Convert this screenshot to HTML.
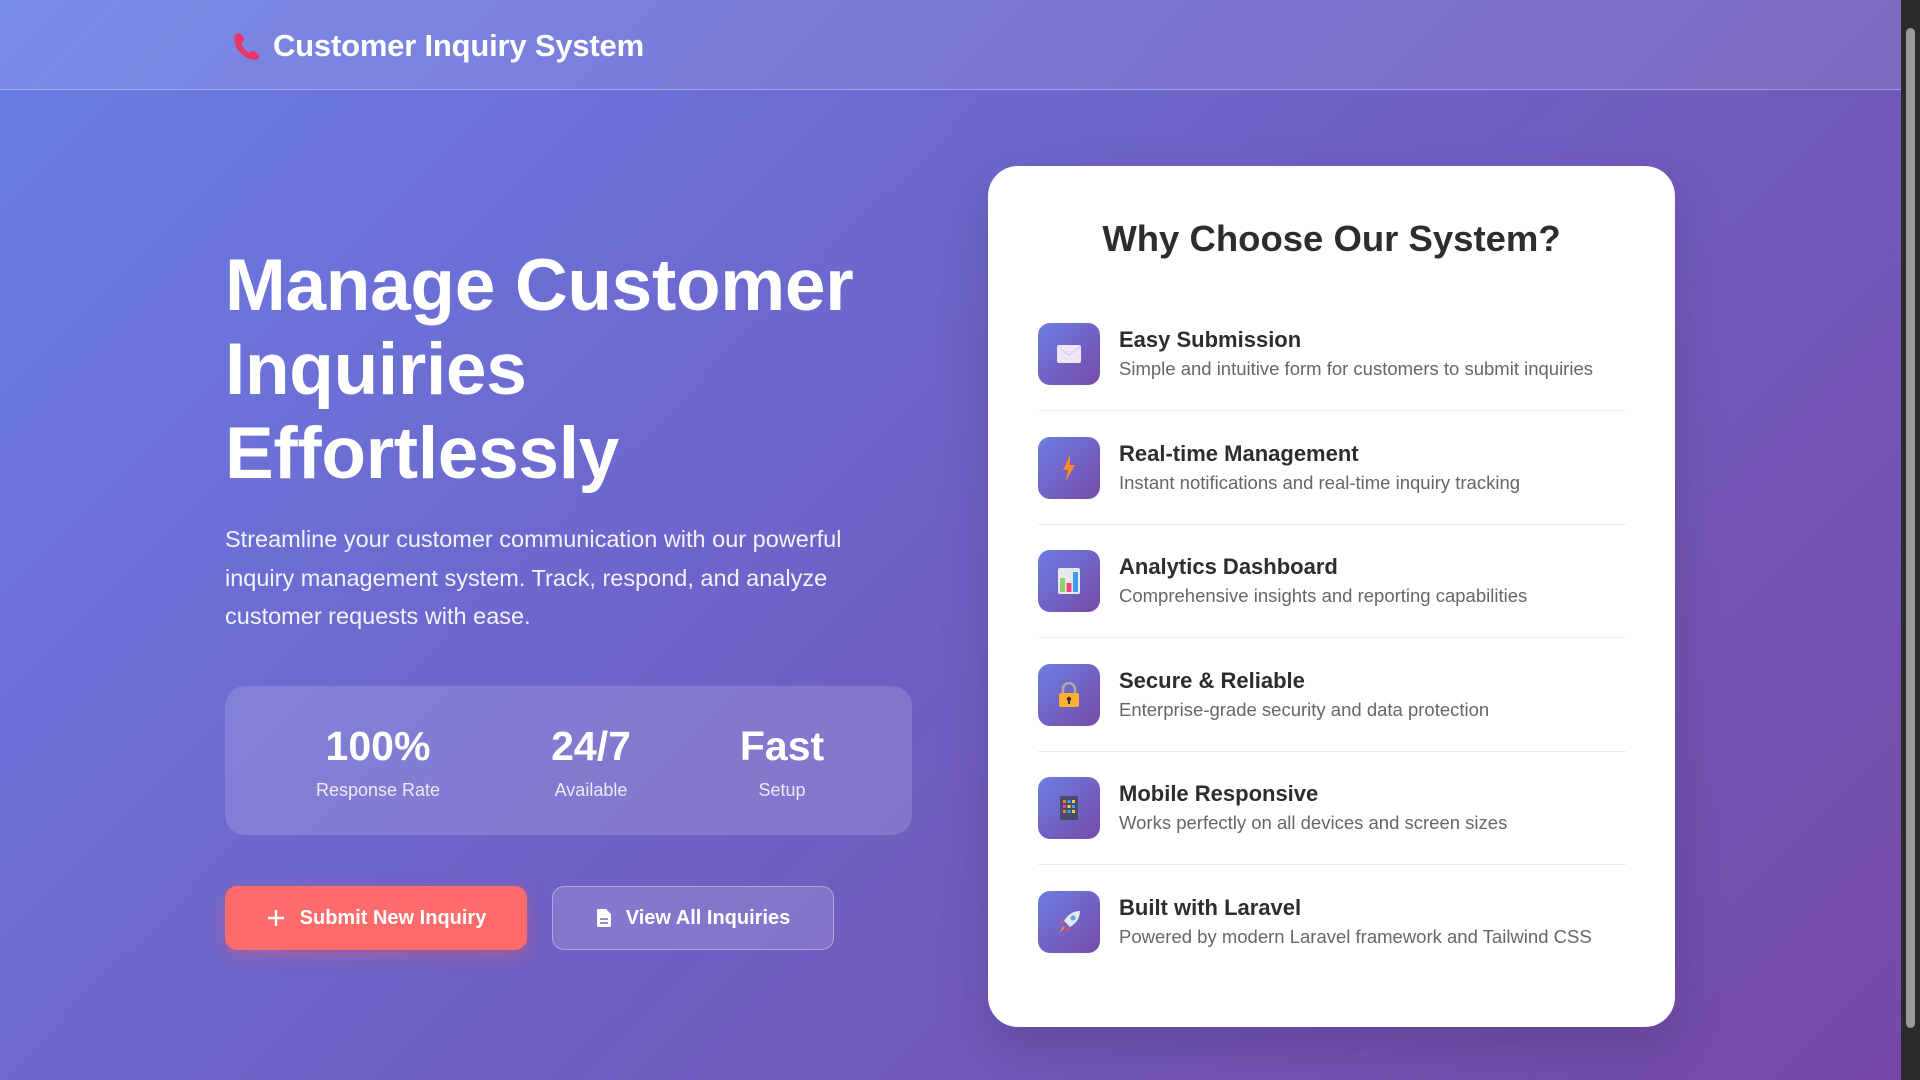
<!DOCTYPE html>
<html><head><meta charset="utf-8"><style>
*{margin:0;padding:0;box-sizing:border-box}
html,body{width:1920px;height:1080px;overflow:hidden}
body{font-family:"Liberation Sans",sans-serif;background:linear-gradient(135deg,#6a7fe6 0%,#6e63c8 45%,#7549a6 100%);position:relative;color:#fff}
.hdr{position:absolute;left:0;top:0;width:1901px;height:90px;background:rgba(255,255,255,0.1);border-bottom:1px solid rgba(255,255,255,0.3)}
.logo{position:absolute;left:231px;top:30px}
.brand{position:absolute;left:273px;top:28px;font-size:31px;font-weight:bold;letter-spacing:-0.2px}
h1{position:absolute;left:225px;top:244px;font-size:73px;line-height:84px;font-weight:bold;letter-spacing:-0.3px}
.lead{position:absolute;left:225px;top:520px;width:690px;font-size:23.5px;line-height:38.5px;color:rgba(255,255,255,0.92)}
.stats{position:absolute;left:225px;top:686px;width:687px;height:149px;border-radius:20px;background:rgba(255,255,255,0.15)}
.st{position:absolute;top:38px;text-align:center;transform:translateX(-50%)}
.st b{display:block;font-size:41px;line-height:44px}
.st span{display:block;font-size:18px;color:rgba(255,255,255,0.85);margin-top:12px}
.btn{position:absolute;top:886px;height:64px;border-radius:12px;font-size:20px;font-weight:bold;display:flex;align-items:center;justify-content:center;gap:14px}
.b1{left:225px;width:302px;background:#ff6b6b;box-shadow:0 6px 18px rgba(255,90,90,0.35)}
.b2{left:552px;width:282px;background:rgba(255,255,255,0.15);border:1.5px solid rgba(255,255,255,0.35)}
.card{position:absolute;left:988px;top:166px;width:687px;height:861px;background:#fff;border-radius:30px;box-shadow:0 20px 50px rgba(0,0,0,0.15)}
.card h2{position:absolute;left:0;width:100%;text-align:center;top:52px;font-size:36.5px;color:#2d2d2d;font-weight:bold}
.it{position:absolute;left:50px;width:588px;height:88px;border-bottom:1.5px solid #ececf0}
.it:last-child{border-bottom:none}
.ic{position:absolute;left:0;top:0;width:62px;height:62px;border-radius:12px;background:linear-gradient(135deg,#6a7ee4,#774aa7);display:flex;align-items:center;justify-content:center}
.t{position:absolute;left:81px;top:4px;font-size:22px;font-weight:bold;color:#2d2d2d;white-space:nowrap}
.d{position:absolute;left:81px;top:35px;font-size:18.5px;color:#666;white-space:nowrap}
.sb{position:absolute;right:0;top:0;width:19px;height:1080px;background:#2b2b2b}
.sb i{position:absolute;left:5px;top:28px;width:9px;height:1000px;background:#9a9a9a;border-radius:5px}
</style></head><body>
<div class="hdr">
<svg class="logo" width="32" height="32" viewBox="0 0 32 32"><path d="M4 5 Q6 2 10 4 L13 9 Q13 12 10 13 Q12 19 18 23 Q20 20 23 21 L28 25 Q29 29 25 30 Q14 30 6 19 Q2 11 4 5Z" fill="#e8366b"/></svg>
<div class="brand">Customer Inquiry System</div>
</div>
<h1>Manage Customer<br>Inquiries<br>Effortlessly</h1>
<div class="lead">Streamline your customer communication with our powerful inquiry management system. Track, respond, and analyze customer requests with ease.</div>
<div class="stats">
<div class="st" style="left:153px"><b>100%</b><span>Response Rate</span></div>
<div class="st" style="left:366px"><b>24/7</b><span>Available</span></div>
<div class="st" style="left:557px"><b>Fast</b><span>Setup</span></div>
</div>
<div class="btn b1"><svg width="20" height="20" viewBox="0 0 20 20"><path d="M10 2v16M2 10h16" stroke="#fff" stroke-width="2.4"/></svg>Submit New Inquiry</div>
<div class="btn b2"><svg width="16" height="20" viewBox="0 0 16 20"><path d="M2 1h8l5 5v12a1 1 0 0 1-1 1H2a1 1 0 0 1-1-1V2a1 1 0 0 1 1-1z" fill="#fff"/><path d="M4 11h8M4 15h8" stroke="#8a7fd0" stroke-width="1.8"/></svg>View All Inquiries</div>
<div class="card">
<h2>Why Choose Our System?</h2>
<div class="it" style="top:157px"><div class="ic"><svg width="24" height="18" viewBox="0 0 24 18"><rect width="24" height="18" rx="2" fill="#efe6f6"/><path d="M0 1l12 9 12-9" stroke="#d6c5e8" fill="none"/></svg></div><div class="t">Easy Submission</div><div class="d">Simple and intuitive form for customers to submit inquiries</div></div>
<div class="it" style="top:271px"><div class="ic"><svg width="14" height="26" viewBox="0 0 14 26"><path d="M8 0L1 15h5l-2 11 9-16H8z" fill="#ff8a2a"/></svg></div><div class="t">Real-time Management</div><div class="d">Instant notifications and real-time inquiry tracking</div></div>
<div class="it" style="top:384px"><div class="ic"><svg width="22" height="26" viewBox="0 0 22 26"><rect width="22" height="26" rx="2" fill="#e8e8ee"/><rect x="2" y="10" width="5" height="14" fill="#8fd16a"/><rect x="8.5" y="15" width="5" height="9" fill="#f0437a"/><rect x="15" y="4" width="5" height="20" fill="#3a9df0"/></svg></div><div class="t">Analytics Dashboard</div><div class="d">Comprehensive insights and reporting capabilities</div></div>
<div class="it" style="top:498px"><div class="ic"><svg width="22" height="26" viewBox="0 0 22 26"><path d="M5 11V7a6 6 0 0 1 12 0v4" stroke="#aaa" stroke-width="2.5" fill="none"/><rect x="1" y="11" width="20" height="14" rx="2" fill="#ffb02e"/><circle cx="11" cy="17" r="2.2" fill="#333"/><rect x="10" y="17" width="2" height="5" fill="#333"/></svg></div><div class="t">Secure &amp; Reliable</div><div class="d">Enterprise-grade security and data protection</div></div>
<div class="it" style="top:611px"><div class="ic"><svg width="18" height="24" viewBox="0 0 18 24"><rect width="18" height="24" rx="2" fill="#4a4a6a"/><g fill="#ff7a3a"><rect x="3" y="4" width="3" height="3"/><rect x="3" y="14" width="3" height="3"/></g><g fill="#3aa8f0"><rect x="7.5" y="4" width="3" height="3"/><rect x="7.5" y="14" width="3" height="3"/><rect x="12" y="9" width="3" height="3"/></g><g fill="#f0d23a"><rect x="12" y="4" width="3" height="3"/><rect x="7.5" y="9" width="3" height="3"/><rect x="12" y="14" width="3" height="3"/></g><rect x="3" y="9" width="3" height="3" fill="#f04a7a"/></svg></div><div class="t">Mobile Responsive</div><div class="d">Works perfectly on all devices and screen sizes</div></div>
<div class="it" style="top:725px"><div class="ic"><svg width="26" height="26" viewBox="0 0 26 26"><path d="M24 2 Q14 2 8 12 L14 18 Q24 12 24 2z" fill="#e6e6ee"/><circle cx="17" cy="9" r="2.5" fill="#4aa8f0"/><path d="M8 12L3 13l3 3zM14 18l-1 5-3-3z" fill="#f0437a"/><path d="M7 17l2 2-6 5z" fill="#ff8a2a"/></svg></div><div class="t">Built with Laravel</div><div class="d">Powered by modern Laravel framework and Tailwind CSS</div></div>
</div>
<div class="sb"><i></i></div>
</body></html>
